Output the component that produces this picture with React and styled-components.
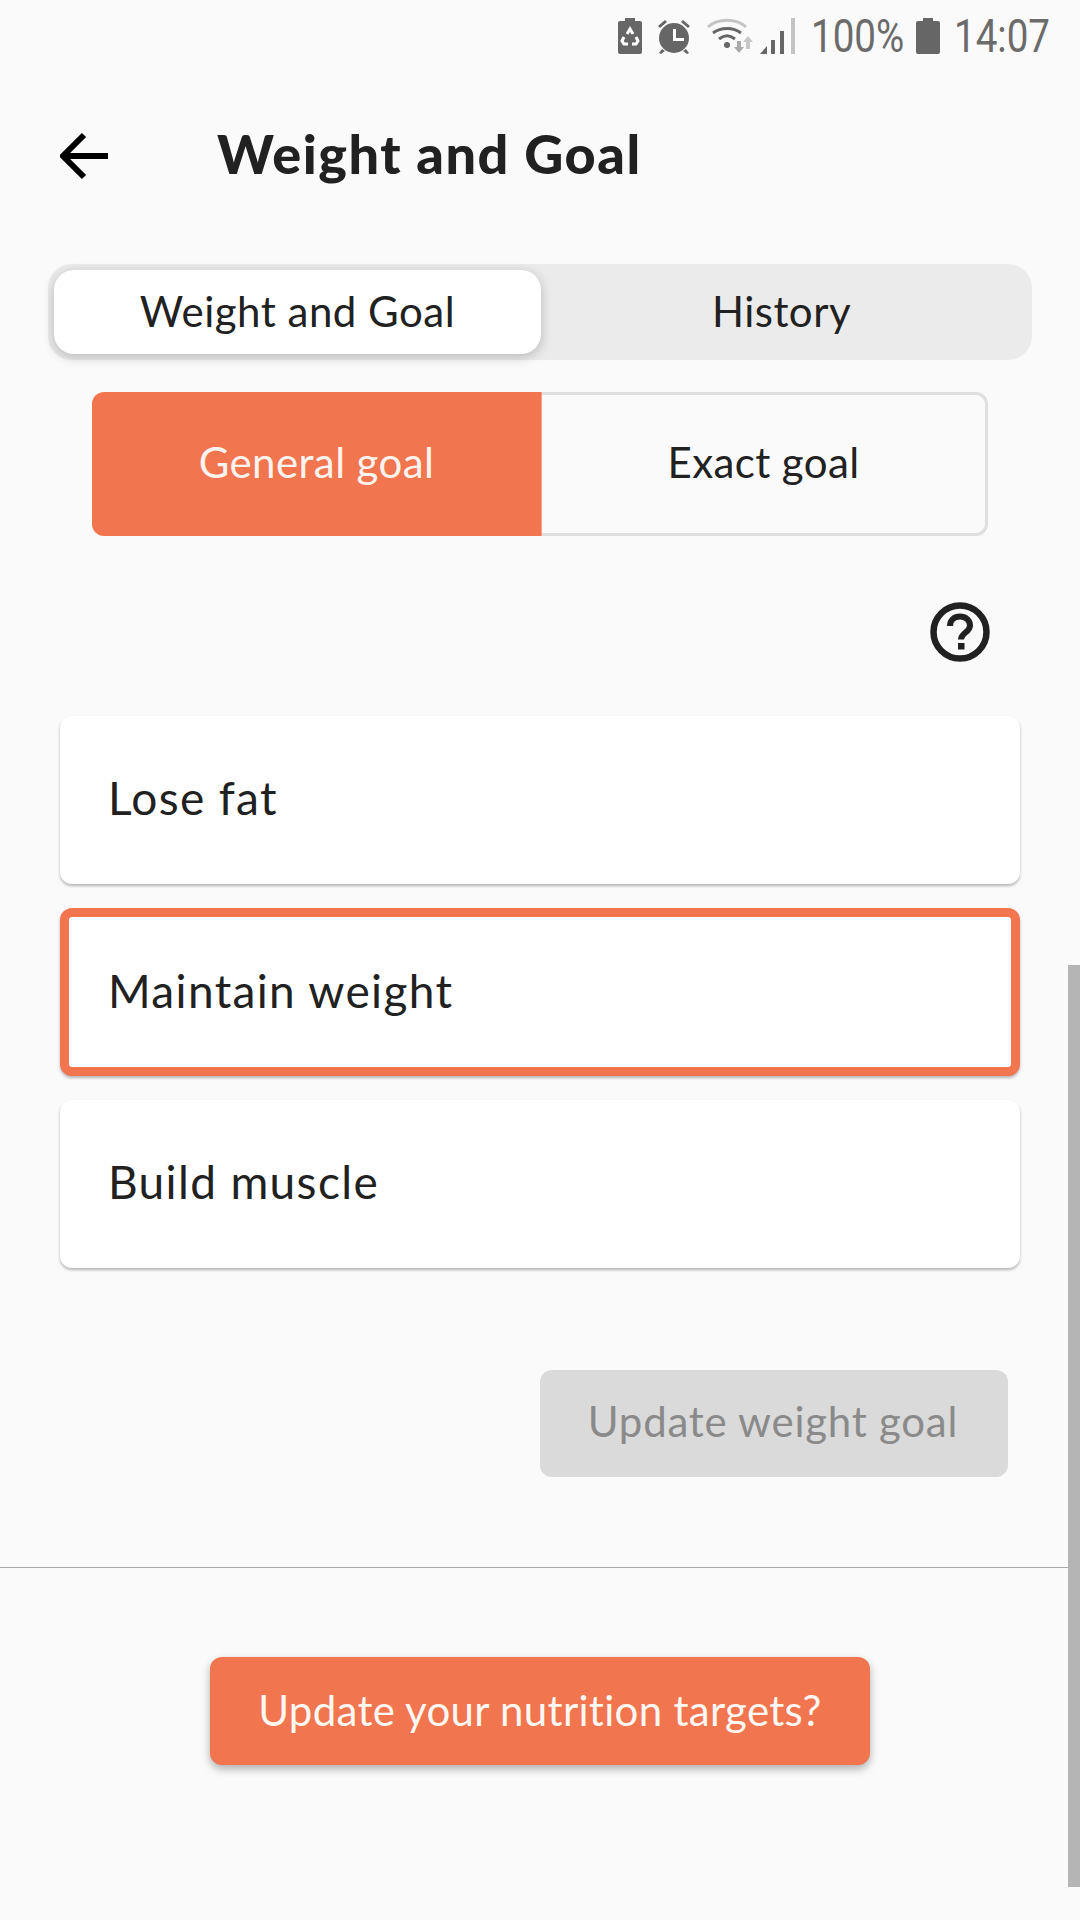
import React from "react";
import styled, { createGlobalStyle } from "styled-components";

const GlobalStyle = createGlobalStyle`
  html, body {
    margin: 0;
    padding: 0;
    background: #fafafa;
  }
  * {
    box-sizing: border-box;
  }
`;

const Page = styled.div`
  position: relative;
  width: 1080px;
  height: 1920px;
  overflow: hidden;
  background: #fafafa;
  color: #212121;
  font-family: "Lato", "Noto Sans", sans-serif;
`;

const StatusBar = styled.div`
  display: flex;
  align-items: center;
  justify-content: flex-end;
  height: 72px;
  padding-right: 30px;
  color: #6b6b6b;
`;

const StatusText = styled.span`
  display: block;
  width: ${(p) => p.$width}px;
  margin-left: ${(p) => p.$left || 0}px;
  font-family: "Roboto", sans-serif;
  font-size: 47px;
  line-height: 74px;
  white-space: nowrap;
  transform: scaleX(0.82);
  transform-origin: left center;
`;

const StatusIcon = styled.svg`
  display: block;
  flex: none;
  margin-left: ${(p) => p.$left || 0}px;
`;

const Header = styled.div`
  display: flex;
  align-items: center;
  height: 168px;
  padding: 0 0 4px 60px;
`;

const BackIcon = styled.svg`
  display: block;
  flex: none;
  margin-top: 4px;
`;

const Title = styled.h1`
  margin: 0 0 0 109px;
  font-size: 54px;
  font-weight: 900;
  letter-spacing: 1.5px;
  line-height: 60px;
  color: #212121;
`;

const Tabs = styled.div`
  display: flex;
  width: 984px;
  height: 96px;
  margin: 24px 0 0 48px;
  padding: 6px;
  border-radius: 24px;
  background: #ebebeb;
`;

const Tab = styled.div`
  display: flex;
  align-items: center;
  justify-content: center;
  flex: ${(p) => (p.$active ? "0 0 487px" : "1")};
  padding: ${(p) => (p.$active ? "0 0 2px" : "0 4px 2px 0")};
  border-radius: 20px;
  font-size: 42px;
  font-weight: 400;
  letter-spacing: 0.5px;
  background: ${(p) => (p.$active ? "#fff" : "transparent")};
  box-shadow: ${(p) => (p.$active ? "0 3px 12px rgba(0, 0, 0, 0.22)" : "none")};
`;

const Segments = styled.div`
  display: flex;
  width: 896px;
  height: 144px;
  margin: 32px 0 0 92px;
`;

const Segment = styled.div`
  display: flex;
  align-items: center;
  justify-content: center;
  width: ${(p) => (p.$active ? "450px" : "446px")};
  padding-bottom: 5px;
  font-size: 42px;
  font-weight: 400;
  letter-spacing: 0.4px;
  color: ${(p) => (p.$active ? "#fdf3ee" : "#212121")};
  background: ${(p) => (p.$active ? "#f1754f" : "transparent")};
  border: ${(p) => (p.$active ? "none" : "3px solid #dfdfdf")};
  border-left: none;
  border-right: ${(p) => (p.$active ? "1px solid #f7a084" : "3px solid #dfdfdf")};
  border-radius: ${(p) => (p.$active ? "12px 0 0 12px" : "0 12px 12px 0")};
`;

const HelpRow = styled.div`
  display: flex;
  justify-content: flex-end;
  margin-top: 66px;
  padding-right: 90px;
`;

const HelpIcon = styled.svg`
  display: block;
`;

const Cards = styled.div`
  display: flex;
  flex-direction: column;
  gap: 24px;
  width: 960px;
  margin: 54px 0 0 60px;
`;

const Card = styled.div`
  display: flex;
  align-items: center;
  height: 168px;
  padding-left: ${(p) => (p.$selected ? "39px" : "48px")};
  padding-bottom: ${(p) => (p.$selected ? "4px" : "5px")};
  border-radius: 12px;
  border: ${(p) => (p.$selected ? "9px solid #f1754f" : "none")};
  background: #fff;
  font-size: 46px;
  font-weight: 400;
  letter-spacing: 1.35px;
  box-shadow: 0 2px 3px rgba(0, 0, 0, 0.28);
`;

const UpdateRow = styled.div`
  display: flex;
  justify-content: flex-end;
  margin-top: 102px;
  padding-right: 72px;
`;

const Button = styled.div`
  display: flex;
  align-items: center;
  justify-content: center;
  border-radius: 12px;
  font-size: 42px;
`;

const DisabledButton = styled(Button)`
  width: 468px;
  height: 107px;
  padding: 0 2px 5px 0;
  background: #dadada;
  color: #8a8a8a;
  letter-spacing: 0.75px;
`;

const Divider = styled.div`
  width: 1068px;
  height: 1px;
  margin-top: 90px;
  background: #a8a8a8;
`;

const PrimaryButton = styled(Button)`
  width: 660px;
  height: 108px;
  margin: 89px auto 0;
  padding-bottom: 3px;
  background: #f1754f;
  color: #fff7f2;
  font-weight: 400;
  letter-spacing: 0.3px;
  box-shadow: 0 4px 8px rgba(0, 0, 0, 0.3);
`;

const Scrollbar = styled.div`
  position: absolute;
  top: 965px;
  right: 0;
  width: 12px;
  height: 922px;
  background: #b5b5b5;
`;

const goals = [
  { id: "lose", label: "Lose fat" },
  { id: "maintain", label: "Maintain weight", selected: true },
  { id: "build", label: "Build muscle" },
];

function App() {
  return (
    <Page>
      <GlobalStyle />
      <StatusBar>
        {/* battery saver */}
        <StatusIcon width="24" height="36" viewBox="0 0 24 36">
          <path d="M7 0h10v3h5a2 2 0 0 1 2 2v29a2 2 0 0 1-2 2H2a2 2 0 0 1-2-2V5a2 2 0 0 1 2-2h5z" fill="#666" />
          <path d="M9 16l3-5 3 5M18 19l2 4-2 3h-4M10 26H6l-2-3 2-4" fill="none" stroke="#fff" strokeWidth="3" />
        </StatusIcon>
        {/* alarm */}
        <StatusIcon $left={14} width="36" height="36" viewBox="0 0 36 36">
          <circle cx="18" cy="20" r="15" fill="#666" />
          <path d="M2 8l7-6 2 2-7 6zM34 8l-7-6-2 2 7 6zM6 31l-3 4 2 1 4-3zM30 31l3 4-2 1-4-3z" fill="#666" />
          <path d="M17 11h3v9h8v3H17z" fill="#fff" />
        </StatusIcon>
        {/* wifi with transfer arrows */}
        <StatusIcon $left={14} width="49" height="36" viewBox="0 0 49 36">
          <path d="M2 9C12 0 30 0 40 9" fill="none" stroke="#c4c4c4" strokeWidth="3" />
          <path d="M7 15c8-6 20-6 28 0" fill="none" stroke="#666" strokeWidth="3" />
          <path d="M13 21c5-4 11-4 16 0" fill="none" stroke="#666" strokeWidth="3" />
          <circle cx="21" cy="27" r="3" fill="#666" />
          <path d="M31 23h4v6h3l-5 6-5-6h3z" fill="#aaa" />
          <path d="M42 18l5 6h-3v7h-4v-7h-3z" fill="#c8c8c8" />
        </StatusIcon>
        {/* signal */}
        <StatusIcon $left={5} width="36" height="36" viewBox="0 0 36 36">
          <path d="M0 36l7-8v8z" fill="#666" />
          <path d="M11 22h4v14h-4z" fill="#666" />
          <path d="M20 13h4v23h-4z" fill="#666" />
          <path d="M31 0h4v36h-4z" fill="#c4c4c4" />
        </StatusIcon>
        <StatusText $left={15} $width={92}>100%</StatusText>
        {/* battery */}
        <StatusIcon $left={13} width="24" height="36" viewBox="0 0 24 36">
          <path d="M7 0h10v3h5a2 2 0 0 1 2 2v29a2 2 0 0 1-2 2H2a2 2 0 0 1-2-2V5a2 2 0 0 1 2-2h5z" fill="#666" />
        </StatusIcon>
        <StatusText $left={14} $width={96}>14:07</StatusText>
      </StatusBar>

      <Header>
        <BackIcon width="48" height="48" viewBox="0 0 48 48">
          <path d="M24 3L3 24l21 21M3 24h45" fill="none" stroke="#000" strokeWidth="6" />
        </BackIcon>
        <Title>Weight and Goal</Title>
      </Header>

      <Tabs>
        <Tab $active>Weight and Goal</Tab>
        <Tab>History</Tab>
      </Tabs>

      <Segments>
        <Segment $active>General goal</Segment>
        <Segment>Exact goal</Segment>
      </Segments>

      <HelpRow>
        <HelpIcon width="60" height="60" viewBox="0 0 60 60">
          <circle cx="30" cy="30" r="26.500" fill="none" stroke="#212121" strokeWidth="6.500" />
          <path d="M20 24c0-6 4.500-9.500 10-9.500s10 3.500 10 9c0 7-9 7-9 14" fill="none" stroke="#212121" strokeWidth="6" />
          <rect x="28" y="41" width="6.500" height="6.500" fill="#212121" />
        </HelpIcon>
      </HelpRow>

      <Cards>
        {goals.map((goal) => (
          <Card key={goal.id} $selected={goal.selected}>
            {goal.label}
          </Card>
        ))}
      </Cards>

      <UpdateRow>
        <DisabledButton>Update weight goal</DisabledButton>
      </UpdateRow>

      <Divider />

      <PrimaryButton>Update your nutrition targets?</PrimaryButton>

      <Scrollbar />
    </Page>
  );
}

export default App;
